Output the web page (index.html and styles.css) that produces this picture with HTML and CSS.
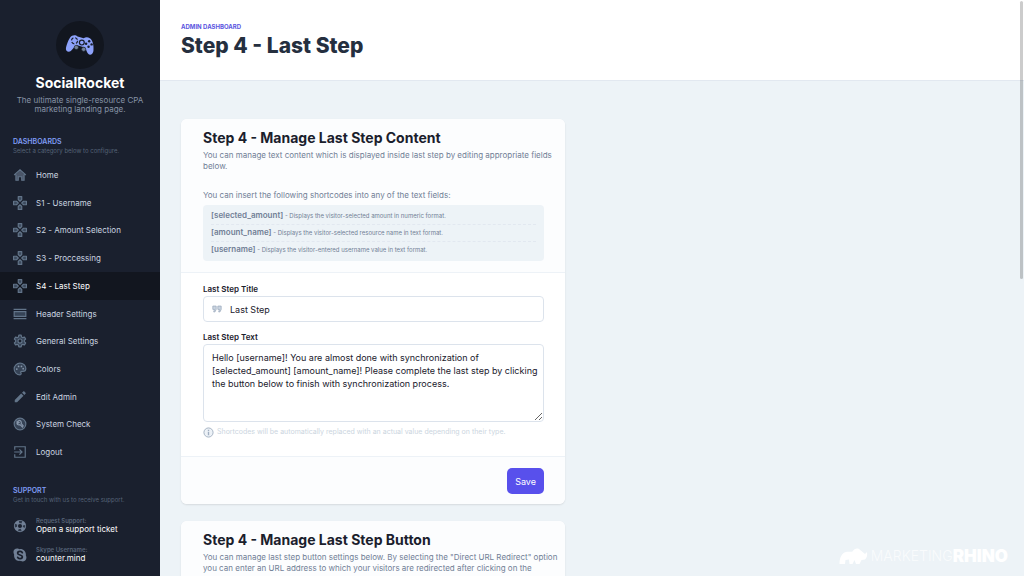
FILE: index.html
```html
<!DOCTYPE html>
<html lang="en">
<head>
  <meta charset="UTF-8">
  <meta name="viewport" content="width=device-width, initial-scale=1.0">
  <title>SocialRocket - Step 4</title>
  <link rel="stylesheet" href="styles.css">
</head>
<body>

  <!-- Shared icon shapes -->
  <svg class="sprite" aria-hidden="true">
    <symbol id="icon-dpad" viewBox="0 0 24 24">
      <g fill="#3c4a5d" stroke="#627489" stroke-width="2" stroke-linejoin="round">
        <path d="M9 1h6v5l-3 3-3-3zM9 23h6v-5l-3-3-3 3zM1 9h5l3 3-3 3H1zM23 9h-5l-3 3 3 3h5z"/>
      </g>
    </symbol>
  </svg>

  <div class="dashboard-container">
    <aside class="sidebar">
      <header class="brand">
        <div class="brand-logo">
          <svg viewBox="0 0 48 36" aria-hidden="true">
            <path fill="#8da2fb" d="M11 3c3-2 7-1 9 1l10 3c3-2 7-2 10 0 5 3 7 12 6 21-1 6-6 8-9 4-2-3-3-7-5-10l-14-4c-3 3-6 7-9 10-4 3-9 0-8-5C3 15 6 6 11 3z"/>
            <circle cx="15" cy="11" r="5" fill="none" stroke="#1a202c" stroke-width="2" stroke-dasharray="5 3"/>
            <circle cx="27" cy="14" r="4" fill="#8da2fb" stroke="#1a202c" stroke-width="2"/>
            <g fill="#1a202c"><circle cx="39" cy="12" r="2"/><circle cx="38" cy="21" r="2"/><circle cx="34" cy="16" r="2"/><circle cx="43" cy="17" r="2"/></g>
            <g fill="#718096" stroke="#1a202c"><circle cx="18" cy="22" r="3.500"/><circle cx="30" cy="25" r="3.500"/></g>
          </svg>
        </div>
        <h2>SocialRocket</h2>
        <p>The ultimate single-resource CPA marketing landing page.</p>
      </header>

      <div class="nav-heading">
        <h3>DASHBOARDS</h3>
        <p>Select a category below to configure.</p>
      </div>
      <nav>
        <ul class="nav-list">
          <li><a href="#"><svg viewBox="0 0 24 24"><path fill="#4a5568" d="M5 11l7-7 7 7v10h-4v-6H9v6H5z"/><path fill="none" stroke="#627489" stroke-width="2" d="M2 12L12 3l10 9M5 11v10h4v-6h6v6h4V11"/></svg>Home</a></li>
          <li><a href="#"><svg><use href="#icon-dpad"/></svg>S1 - Username</a></li>
          <li><a href="#"><svg><use href="#icon-dpad"/></svg>S2 - Amount Selection</a></li>
          <li><a href="#"><svg><use href="#icon-dpad"/></svg>S3 - Proccessing</a></li>
          <li><a href="#" class="active"><svg><use href="#icon-dpad"/></svg>S4 - Last Step</a></li>
          <li><a href="#"><svg viewBox="0 0 24 24"><path fill="#364356" d="M2 8h20v8H2z"/><path fill="none" stroke="#627489" stroke-width="2" d="M1 4h22M1 20h22M2 8h20v8H2z"/></svg>Header Settings</a></li>
          <li><a href="#"><svg viewBox="0 0 24 24"><path fill="#364356" stroke="#627489" stroke-width="2" stroke-linejoin="round" d="M10 2h4l.6 3 2.200 1.300 2.900-1 2 3.400-2.300 2v2.600l2.300 2-2 3.400-2.900-1-2.200 1.300-.6 3h-4l-.6-3-2.200-1.300-2.900 1-2-3.400 2.300-2v-2.600l-2.300-2 2-3.400 2.900 1L9.400 5z"/><circle cx="12" cy="12" r="3.500" fill="#1a202e" stroke="#627489" stroke-width="2"/></svg>General Settings</a></li>
          <li><a href="#"><svg viewBox="0 0 24 24"><path fill="#364356" stroke="#627489" stroke-width="2" d="M12 2a10 10 0 1 0 0 20c2 0 2.500-2 1.500-3.200-1-1.400 0-2.800 1.500-2.800h2c3 0 5-2 5-5 0-5-4.500-9-10-9z"/><g fill="#8796aa"><circle cx="6.500" cy="12" r="1.500"/><circle cx="9.500" cy="7.500" r="1.500"/><circle cx="14.500" cy="7.500" r="1.500"/><circle cx="17.500" cy="11.500" r="1.500"/></g></svg>Colors</a></li>
          <li><a href="#"><svg viewBox="0 0 24 24"><path fill="#627489" d="M3 17v4h4L18 10l-4-4zM15.500 4.500l4 4 2-2c.6-.6.6-1.400 0-2l-2-2c-.6-.6-1.400-.6-2 0z"/></svg>Edit Admin</a></li>
          <li><a href="#"><svg viewBox="0 0 24 24"><circle cx="12" cy="12" r="10" fill="#364356" stroke="#627489" stroke-width="2"/><path fill="none" stroke="#8796aa" stroke-width="2" d="M8 7l2.500 2.500L8 11 7 8c-1 5 2 6 5 5l5 5M9 6c4-1 6 2 5 5l4 5"/></svg>System Check</a></li>
          <li><a href="#"><svg viewBox="0 0 24 24"><path fill="none" stroke="#627489" stroke-width="2" d="M3 8V3h18v18H3v-5M2 12h13M11 7.500l4.500 4.500-4.500 4.500"/></svg>Logout</a></li>
        </ul>
      </nav>

      <div class="nav-heading support-heading">
        <h3>SUPPORT</h3>
        <p>Get in touch with us to receive support.</p>
      </div>
      <ul class="support-list">
        <li><a href="#">
          <svg viewBox="0 0 24 24"><circle cx="12" cy="12" r="7" fill="none" stroke="#718096" stroke-width="7"/><circle cx="12" cy="12" r="7" fill="none" stroke="#2d3748" stroke-width="4" stroke-dasharray="5 6" stroke-dashoffset="2.500"/></svg>
          <span><small>Request Support:</small>Open a support ticket</span>
        </a></li>
        <li><a href="#">
          <svg viewBox="0 0 24 24"><path fill="#718096" d="M7 1c2 0 3 .6 4 1 7-1 12 5 11 11 3 5-1 10-6 10-1 0-3-.5-4-1C5 23 1 17 2 11-1 6 2 1 7 1z"/><path fill="none" stroke="#1a202e" stroke-width="3" stroke-linecap="round" d="M16 8c-1-3-8-3-8 1 0 4 8 2 8 6 0 4-7 4-8 1"/></svg>
          <span><small>Skype Username:</small>counter.mind</span>
        </a></li>
      </ul>
    </aside>

    <div class="main-content">
      <header class="topbar">
        <p>ADMIN DASHBOARD</p>
        <h1>Step 4 - Last Step</h1>
      </header>

      <main class="cards">
        <form class="card">
          <div class="card-header">
            <h2>Step 4 - Manage Last Step Content</h2>
            <p>You can manage text content which is displayed inside last step by editing appropriate fields below.</p>
            <p class="shortcodes-intro">You can insert the following shortcodes into any of the text fields:</p>
            <ul class="shortcodes">
              <li><strong>[selected_amount]</strong> - Displays the visitor-selected amount in numeric format.</li>
              <li><strong>[amount_name]</strong> - Displays the visitor-selected resource name in text format.</li>
              <li><strong>[username]</strong> - Displays the visitor-entered username value in text format.</li>
            </ul>
          </div>
          <div class="card-body">
            <label for="step-title">Last Step Title</label>
            <div class="input-group">
              <svg viewBox="0 0 24 18" aria-hidden="true"><path fill="#cbd5e0" stroke="#a0aec0" stroke-width="2" d="M2 2h8v8l-3 6H4l2-6H2zM14 2h8v8l-3 6h-3l2-6h-4z"/></svg>
              <input type="text" id="step-title" value="Last Step">
            </div>
            <label for="step-text">Last Step Text</label>
            <textarea id="step-text">Hello [username]! You are almost done with synchronization of [selected_amount] [amount_name]! Please complete the last step by clicking the button below to finish with synchronization process.</textarea>
            <p class="hint">
              <svg viewBox="0 0 24 24" aria-hidden="true"><circle cx="12" cy="12" r="10" fill="#edf2f7" stroke="#a0aec0" stroke-width="2"/><path fill="none" stroke="#a0aec0" stroke-width="3" d="M12 6v3M12 11v7"/></svg>
              Shortcodes will be automatically replaced with an actual value depending on their type.
            </p>
          </div>
          <div class="card-footer">
            <button type="submit">Save</button>
          </div>
        </form>

        <section class="card">
          <div class="card-header">
            <h2>Step 4 - Manage Last Step Button</h2>
            <p>You can manage last step button settings below. By selecting the "Direct URL Redirect" option you can enter an URL address to which your visitors are redirected after clicking on the</p>
          </div>
        </section>
      </main>
    </div>
  </div>

  <div class="scroll-thumb"></div>
  <div class="watermark">
    <svg viewBox="0 0 60 36" aria-hidden="true"><path fill="#fff" d="M1 34c0-12 4-22 13-24 5-2 9 1 13-1 3-5 8-7 13-5l6 5 6 5 4-4c1 6 0 11-4 15l-7 1-4 8h-7l-3-8-4 8h-6l-1-9-7 1-1 8z"/></svg>
    <span>MARKETING</span><strong>RHINO</strong>
  </div>

</body>
</html>
```
FILE: styles.css
```css
/* General Styles */
* {
  box-sizing: border-box;
}

body {
  margin: 0;
  font-family: Inter, "Liberation Sans", sans-serif;
  font-size: 8px;
  color: #1a202c;
  background-color: #edf3f7;
  overflow: hidden;
}

h1, h2, h3, p, ul {
  margin: 0;
  padding: 0;
}

ul {
  list-style: none;
}

a {
  color: inherit;
  text-decoration: none;
}

.sprite {
  display: none;
}

.dashboard-container {
  display: flex;
  height: 100vh;
}

/* Sidebar Styles */
.sidebar {
  flex: 0 0 160px;
  background-color: #1a202e;
  color: #cbd5e0;
  padding-top: 21px;
  overflow: hidden;
}

.brand {
  text-align: center;
  padding: 0 12px;
  margin-bottom: 23px;
}

.brand-logo {
  width: 48px;
  height: 48px;
  margin: 0 auto 6px;
  border-radius: 50%;
  background-color: #12161f;
  display: flex;
  align-items: center;
  justify-content: center;
}

.brand-logo svg {
  width: 30px;
  height: 22px;
}

.brand h2 {
  font-size: 14px;
  line-height: 16px;
  color: #fff;
  margin-bottom: 5px;
}

.brand p {
  line-height: 9px;
  color: #8793a6;
}

.nav-heading {
  padding: 0 13px;
  margin-bottom: 6px;
}

.nav-heading h3 {
  font-size: 7px;
  line-height: 9px;
  font-weight: 600;
  color: #7f9cf5;
}

.nav-heading p {
  font-size: 6px;
  line-height: 9px;
  color: #566377;
}

.nav-list {
  display: flex;
  flex-direction: column;
  height: 305px;
}

.nav-list li {
  flex: 1;
}

.nav-list a {
  display: flex;
  align-items: center;
  gap: 9px;
  height: 100%;
  padding: 0 13px;
}

.nav-list svg {
  width: 14px;
  height: 14px;
}

.nav-list .active {
  background-color: #12161f;
  color: #fff;
}

.support-heading {
  margin-top: 20px;
  margin-bottom: 13px;
}

.support-list a {
  display: flex;
  align-items: center;
  gap: 9px;
  padding: 0 13px;
  margin-bottom: 12px;
  line-height: 9px;
  color: #fff;
}

.support-list svg {
  width: 14px;
  height: 14px;
}

.support-list small {
  display: block;
  font-size: 6px;
  line-height: 8px;
  font-weight: 600;
  color: #566377;
}

/* Main Content Styles */
.main-content {
  flex: 1;
  overflow: hidden;
}

.topbar {
  padding: 22px 21px;
  height: 81px;
  background-color: #fff;
  border-bottom: 1px solid #e2e8f0;
}

.topbar p {
  font-size: 6px;
  line-height: 9px;
  font-weight: 700;
  color: #5a55e0;
}

.topbar h1 {
  font-size: 21px;
  line-height: 30px;
  font-weight: 800;
  color: #252f3f;
}

.cards {
  padding: 38px 21px;
}

/* Cards */
.card {
  display: block;
  max-width: 384px;
  margin-bottom: 17px;
  border-radius: 6px;
  background-color: #fff;
  box-shadow: 0 1px 2px rgba(0, 0, 0, 0.1);
  overflow: hidden;
}

.card-header {
  padding: 11px 21px 11px 22px;
  background-color: #fcfdfe;
  border-bottom: 1px solid #edf2f7;
  line-height: 11px;
  color: #718096;
}

.card-header h2 {
  font-size: 14px;
  line-height: 16px;
  margin-bottom: 4px;
  color: #1a202c;
}

/* Intro text may run a little past the fields */
.card-header p {
  margin-right: -16px;
}

.card-header .shortcodes-intro {
  margin-top: 18px;
  margin-bottom: 4px;
}

.shortcodes {
  padding: 3px 8px;
  border-radius: 4px;
  background-color: #edf3f7;
  font-size: 6px;
  line-height: 16px;
}

.shortcodes li + li {
  border-top: 1px dashed #e2e8f0;
}

.shortcodes strong {
  font-size: 8px;
  line-height: 8px;
  font-weight: 600;
}

.card-body {
  padding: 12px 21px 18px 22px;
}

.card-body label {
  display: block;
  font-weight: 600;
  line-height: 9px;
  margin-bottom: 2px;
}

.input-group {
  display: flex;
  align-items: center;
  gap: 8px;
  height: 26px;
  padding: 0 8px;
  margin-bottom: 11px;
  border: 1px solid #dce3ec;
  border-radius: 4px;
}

.input-group svg {
  width: 10px;
  height: 8px;
}

.input-group input {
  flex: 1;
  padding: 0;
  border: 0;
  outline: 0;
  font: inherit;
  font-size: 9px;
  color: #1a202c;
}

textarea {
  display: block;
  width: 100%;
  height: 78px;
  padding: 6px 3px 6px 8px;
  border: 1px solid #dce3ec;
  border-radius: 4px;
  font: inherit;
  font-size: 9px;
  line-height: 13px;
  color: #1a202c;
  resize: vertical;
}

.hint {
  display: flex;
  align-items: center;
  gap: 3px;
  margin-top: 4px;
  font-size: 7px;
  line-height: 12px;
  color: #cbd5e0;
}

.hint svg {
  width: 11px;
  height: 11px;
}

.card-footer {
  display: flex;
  justify-content: flex-end;
  padding: 11px 21px 10px;
  background-color: #fcfdfe;
  border-top: 1px solid #edf2f7;
}

.card-footer button {
  height: 26px;
  padding: 0 8px;
  border: 0;
  border-radius: 5px;
  background-color: #5850ec;
  color: #fff;
  font: inherit;
  font-size: 9px;
  cursor: pointer;
}

/* Overlays */
.scroll-thumb {
  position: absolute;
  top: 1px;
  right: 1px;
  width: 3px;
  height: 278px;
  border-radius: 2px;
  background-color: rgba(0, 0, 0, 0.2);
}

.watermark {
  position: absolute;
  right: 16px;
  bottom: 11px;
  display: flex;
  align-items: center;
  color: #fff;
  font-size: 14px;
  line-height: 18px;
}

.watermark svg {
  width: 30px;
  height: 18px;
  margin-right: 2px;
}

.watermark span {
  font-weight: 300;
  opacity: 0.7;
}

.watermark strong {
  font-size: 17px;
  font-weight: 900;
}
```
